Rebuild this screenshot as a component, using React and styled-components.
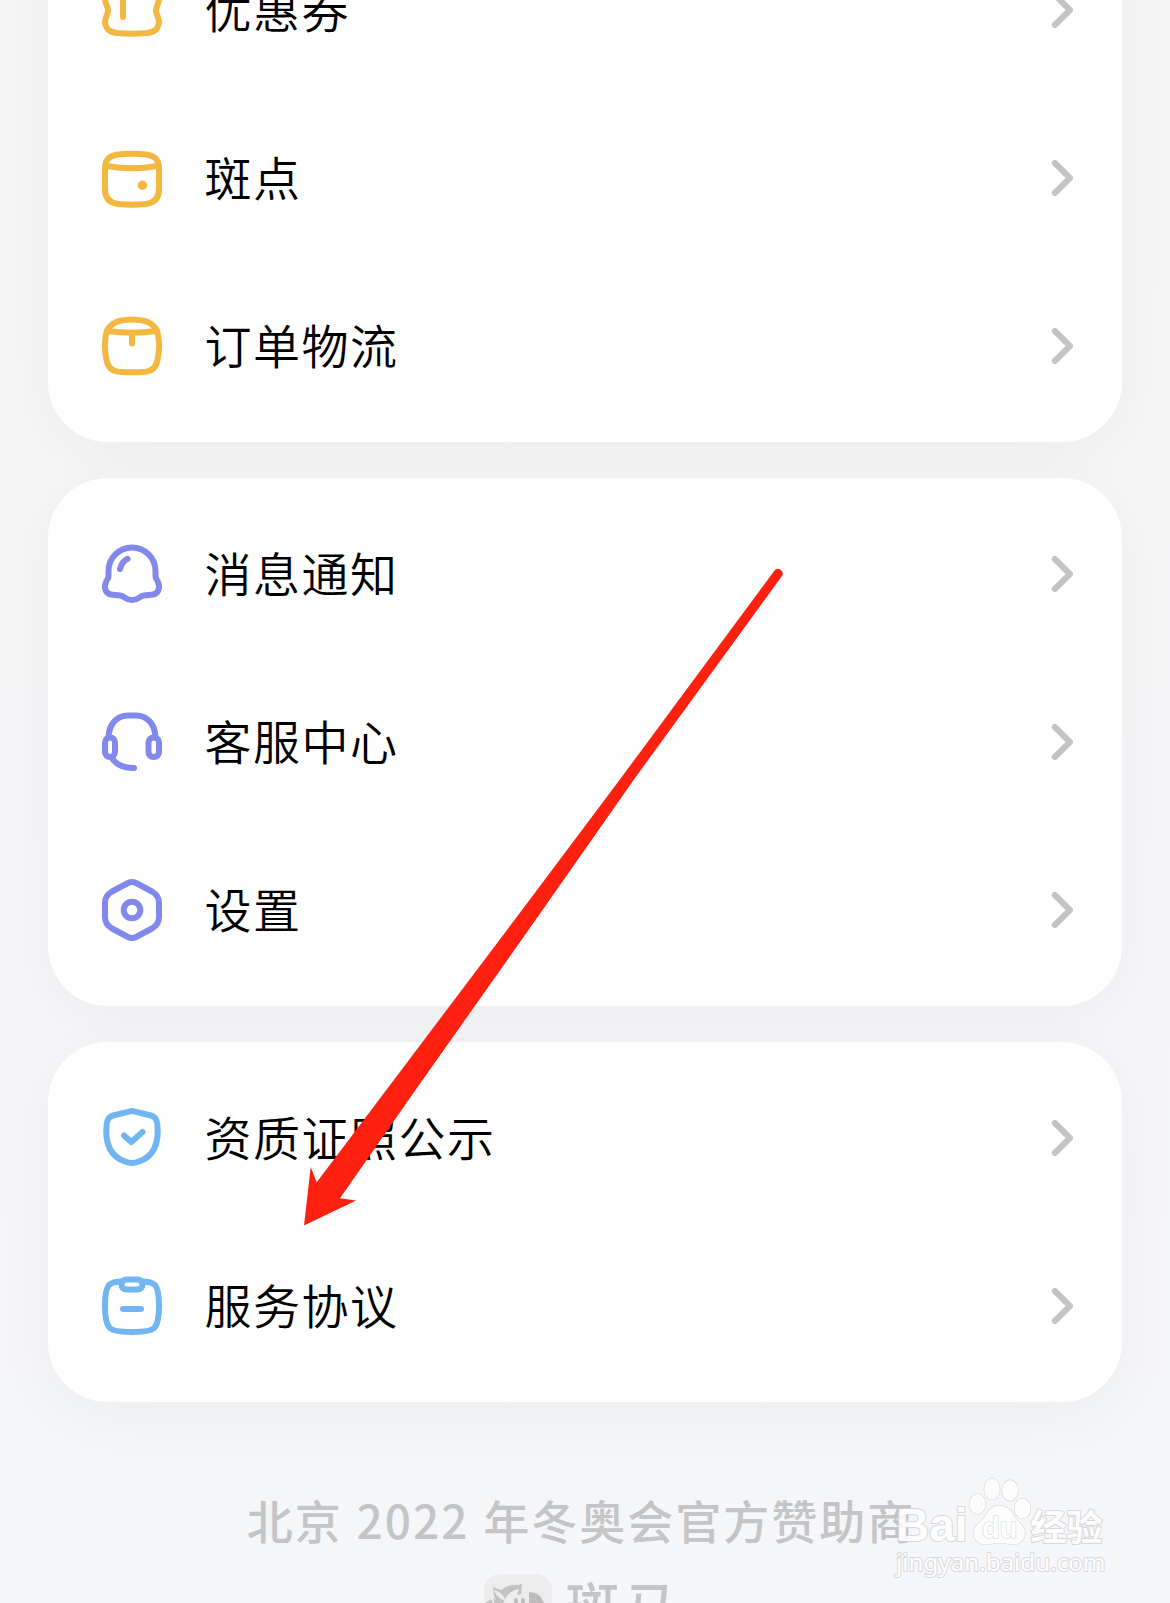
import React from "react";
import styled, { createGlobalStyle } from "styled-components";

const GlobalStyle = createGlobalStyle`
    * {
        box-sizing: border-box;
    }

    body {
        margin: 0;
        background-color: #f5f7fa;
        font-family: "Noto Sans CJK SC", "Noto Sans", sans-serif;
    }
`

const Screen = styled.main`
    position: relative;
    height: 1603px;
    overflow: hidden;
    padding: 0 48px;
    background: linear-gradient(#f5f5f6 0, #f5f6f8 1480px, #f5f7fa 1603px);
`

// the list is scrolled, so the first card starts above the screen
const CardList = styled.div`
    display: flex;
    flex-direction: column;
    gap: 36px;
    margin-top: -86px;
`

const Card = styled.section`
    padding: 12px 48px 12px 54px;
    border-radius: 60px;
    background-color: white;
    box-shadow: 0 12px 60px rgba(0, 0, 0, 0.04);
`

const Row = styled.div`
    display: flex;
    align-items: center;
    height: 168px;
    color: ${props => props.color};
`

const RowIcon = styled.svg`
    width: 60px;
    height: 60px;
    overflow: visible;
    fill: none;
    stroke: currentColor;
    stroke-width: 6;
    stroke-linecap: round;
    stroke-linejoin: round;
`

const Label = styled.span`
    flex: 1;
    margin-left: 42.5px;
    padding-bottom: 4px;
    color: black;
    font-size: 47px;
    font-weight: 350;
    letter-spacing: 1.5px;
    line-height: 60px;
`

const Chevron = styled.svg`
    width: 24px;
    height: 38px;
    fill: none;
    stroke: #c4c4c4;
    stroke-width: 6;
    stroke-linecap: round;
    stroke-linejoin: round;
`

const Footer = styled.footer`
    display: flex;
    flex-direction: column;
    align-items: center;
    padding: 87px 8px 0 0;
    color: #c4c5c7;
`

const Sponsor = styled.p`
    margin: 0;
    font-size: 46px;
    font-weight: 500;
    letter-spacing: 2px;
    word-spacing: 1.5px;
    line-height: 60px;
    white-space: nowrap;
`

const Brand = styled.div`
    display: flex;
    align-items: flex-start;
    gap: 14px;
    margin: 25px 0 0 5px;
    font-size: 54px;
    font-weight: 500;
    letter-spacing: 5px;
    line-height: 62px;
`

const Arrow = styled.svg`
    position: absolute;
    left: 0;
    top: 0;
    fill: #ff2010;
`

const Watermark = styled.div`
    position: absolute;
    left: 896px;
    top: 1476px;
    color: white;
    opacity: 0.85;
    -webkit-text-stroke: 2px #d3d3d5;
    paint-order: stroke fill;
`

const WatermarkTop = styled.div`
    display: flex;
    align-items: flex-end;
    height: 70px;
    font-family: "Liberation Sans", sans-serif;
    font-size: 46px;
    font-weight: bold;
    line-height: 42px;
`

const Paw = styled.svg`
    width: 64px;
    height: 71px;
    margin-right: -1px;
    fill: white;
    stroke: #d3d3d5;
    stroke-width: 1.2;
`

const PawText = styled.text`
    font-size: 29px;
    font-weight: bold;
`

const WatermarkCn = styled.span`
    font-family: "Noto Sans CJK SC", sans-serif;
    font-size: 36px;
`

const WatermarkUrl = styled.div`
    font-family: "Noto Sans", sans-serif;
    font-size: 24.200px;
    line-height: 32px;
`

const icons = {
    coupon: (
        <>
            <path d="M15 5Q30 3.500 45 5C53 6 57 10 57 18C57 24 54 26 54 30.500C54 35 57 37 57 42C56 50 52 52 45 53Q30 54.500 15 53C8 52 4 50 3 42C3 37 6 35 6 30.500C6 26 3 24 3 18C3 10 7 6 15 5Z" />
            <path d="M21 21V37" />
        </>
    ),
    wallet: (
        <>
            <path d="M16 6.500Q30 5 44 6.500C53 7.500 57 12 57 21V41C57 51 52 55 44 56Q30 57.500 16 56C8 55 3 51 3 41V21C3 12 7 7.500 16 6.500Z" />
            <path d="M5 18Q30 22.500 55 18" />
            <circle cx="40.500" cy="37.300" r="4.700" fill="currentColor" stroke="none" />
        </>
    ),
    parcel: (
        <>
            <path d="M5 14.500C10 6 18 3.500 30 3.500S50 6 55 14.500C57.500 23 57.500 35 55.500 44C54 52 50 55 44 55.700Q30 57 16 55.700C10 55 6 52 4.500 44C2.500 35 2.500 23 5 14.500Z" />
            <path d="M6 15Q30 18.500 54 15M30 18V27.500" />
        </>
    ),
    bell: (
        <>
            <path d="M6.500 27A23.500 23.500 0 0 1 53.500 27V32Q53.500 34.500 55.500 37C58.500 43 57 49.500 51 50.500L42 51.500C37 52 37 56 30 56S23 52 18 51.500L9 50.500C3 49.500 1.500 43 4.500 37Q6.500 34.500 6.500 32Z" />
            <path d="M18 25Q20 17.500 25.500 14.800" />
        </>
    ),
    headset: (
        <>
            <path d="M6.500 25C7 12 15 3.500 26 3.500H34C45 3.500 53 12 53.500 25" />
            <rect x="3" y="25.500" width="10" height="19.500" rx="5" />
            <rect x="46.500" y="25.500" width="10.500" height="19.500" rx="5" />
            <path d="M10 46Q16 56 32 56" />
        </>
    ),
    settings: (
        <>
            <path d="M26 3Q30 1 34 3L50 11.500Q57 15.500 57 23V37Q57 44.500 50 48.500L34 57Q30 59 26 57L10 48.500Q3 44.500 3 37V23Q3 15.500 10 11.500Z" />
            <circle cx="30" cy="30" r="8.300" />
        </>
    ),
    shield: (
        <>
            <path d="M27 3.700Q30 2.500 33 3.700L49 7.500Q54.500 9 55.300 16Q58.500 46 37 53.500Q30 56.500 23 53.500Q1.500 46 4.700 16Q5.500 9 11 7.500Z" />
            <path d="M22 27.500L29.300 34L40.500 24" />
        </>
    ),
    agreement: (
        <>
            <path d="M20 5.500Q11 5.500 7 9Q3 14 3 30Q3 46 7 51Q10 56 30 56T53 51Q57 46 57 30Q57 14 53 9Q49 5.500 40 5.500" />
            <rect x="19.500" y="3.500" width="21" height="10" rx="5" />
            <path d="M21 33H39" />
        </>
    )
}

const cards = [
    {
        color: "#f2b840",
        rows: [["coupon", "优惠券"], ["wallet", "斑点"], ["parcel", "订单物流"]]
    },
    {
        color: "#8388ed",
        rows: [["bell", "消息通知"], ["headset", "客服中心"], ["settings", "设置"]]
    },
    {
        color: "#72b5f3",
        rows: [["shield", "资质证照公示"], ["agreement", "服务协议"]]
    }
]

const ZebraLogo = () => (
    <svg width="68" height="68" viewBox="0 0 68 68">
        <rect width="68" height="68" rx="16" fill="#ededee" />
        <path d="M9 13L17 16Q25 10 34 11L38 10L37 21Q31 26 32 38H12Q14 30 10 22Z" fill="#c4c1c3" />
        <path d="M10 16Q18 18 21 25Q25 17 35 15L33 21Q39 19 45 20V40H14Q15 31 21 27Q12 23 10 16Z" fill="#ededee" />
        <path d="M45 18Q61 18 62 40H45Z" fill="#bebbbd" />
        <path d="M1 29L7 25L11 33L7 40H1ZM9 24L15 29L11 32Z" fill="#c4c1c3" />
        <ellipse cx="32" cy="27" rx="2" ry="3" fill="#bebbbd" />
        <ellipse cx="39" cy="27" rx="2" ry="3" fill="#bebbbd" />
    </svg>
)

const App = () => (
    <Screen>
        <GlobalStyle />
        <CardList>
            {cards.map(card => (
                <Card key={card.color}>
                    {card.rows.map(([icon, label]) => (
                        <Row key={icon} color={card.color}>
                            <RowIcon viewBox="0 0 60 60">{icons[icon]}</RowIcon>
                            <Label>{label}</Label>
                            <Chevron viewBox="0 0 24 38">
                                <path d="M4.800 4L20 19L4.800 34" />
                            </Chevron>
                        </Row>
                    ))}
                </Card>
            ))}
        </CardList>
        <Footer>
            <Sponsor>北京 2022 年冬奥会官方赞助商</Sponsor>
            <Brand>
                <ZebraLogo />
                斑马
            </Brand>
        </Footer>
        <Arrow width="1170" height="1603" viewBox="0 0 1170 1603">
            <path d="M304 1225.500L310.700 1167L316.700 1182.300L514.500 920L621 778L774.500 570.500A4.700 4.700 0 0 1 782.300 575.500L635 778L535.500 920L415.500 1090L340 1198.300L356 1200.500Z" />
        </Arrow>
        <Watermark>
            <WatermarkTop>
                Bai
                <Paw viewBox="0 0 64 71">
                    <ellipse cx="9.500" cy="29" rx="8" ry="10" />
                    <ellipse cx="24" cy="14" rx="7.700" ry="10.500" />
                    <ellipse cx="42" cy="15.500" rx="8" ry="10.300" />
                    <ellipse cx="54.500" cy="33.500" rx="8" ry="10" />
                    <path d="M20 36Q31 25 43 36Q46 43 53 49Q59 56 56 63Q52 71 42 69Q31 67 22 69Q10 71 6 62Q4 54 11 48Q17 43 20 36Z" />
                    <PawText x="14" y="63">du</PawText>
                </Paw>
                <WatermarkCn>经验</WatermarkCn>
            </WatermarkTop>
            <WatermarkUrl>jingyan.baidu.com</WatermarkUrl>
        </Watermark>
    </Screen>
)

export default App;
